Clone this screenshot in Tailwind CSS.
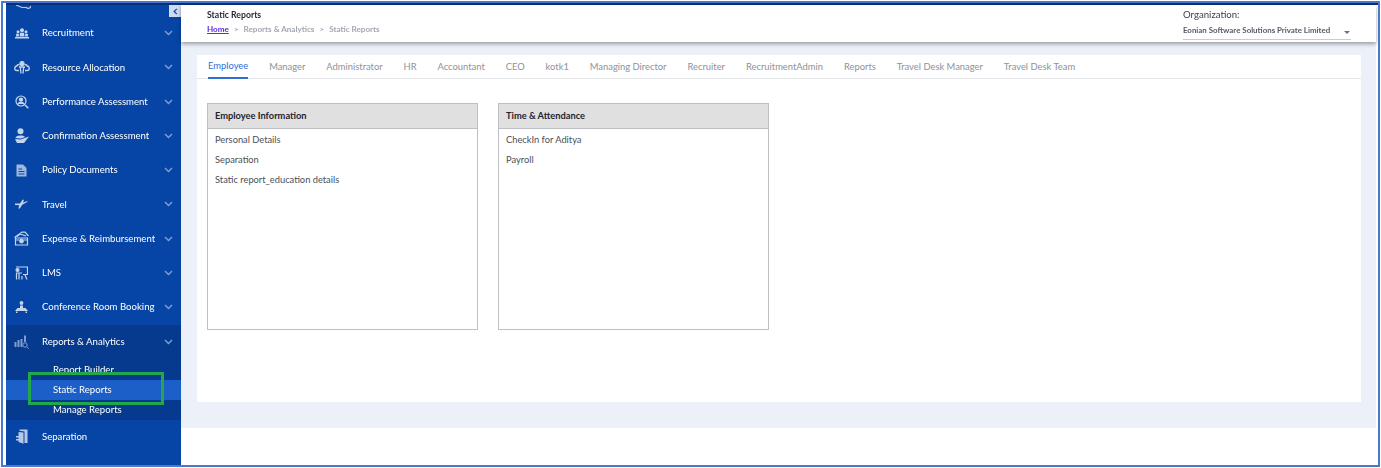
<!DOCTYPE html>
<html lang="en">

<head>
    <meta charset="UTF-8" />
    <title>Static Reports</title>
    <script src="https://cdn.jsdelivr.net/npm/@tailwindcss/browser@4"></script>
</head>

<body class="bg-white overflow-hidden font-['Lato',sans-serif]">
    <div class="relative w-[1381px] h-[468px] p-[1px]">
        <div class="w-full h-full border-2 border-[#4a78cc] flex flex-col overflow-hidden">
            <div class="h-[2px] ml-[3px] bg-[#0a2f78] shrink-0"></div>
            <div class="flex flex-1 min-h-0 pl-[3px] blur-[0.3px]">

                <!-- Sidebar -->
                <aside class="relative w-[175px] shrink-0 bg-[#0645a5] text-[9.6px] text-white whitespace-nowrap overflow-hidden">
                    <div class="absolute right-0 top-0 w-[12px] h-[12px] bg-[#cfdcf0] text-[#1c4f9e] flex items-center justify-center">
                        <svg width="7" height="7" viewBox="0 0 8 8" fill="none" stroke="currentColor" stroke-width="1.6"><path d="M5.5 1 L2.5 4 L5.5 7" /></svg>
                    </div>

                    <div class="h-[11px] flex pl-[9px] items-start overflow-hidden">
                        <svg width="16" height="4" viewBox="0 0 16 4" fill="none" stroke="#b9cbe8" stroke-width="1.2"><path d="M1 0 L7 2.5 H11" /><path d="M11 2 C12 4 15 4 16 1" /></svg>
                    </div>

                    <!-- Recruitment -->
                    <div class="h-[34.25px] flex items-center">
                        <span class="w-[31px] mr-[5px] flex justify-center">
                            <svg width="14" height="11" viewBox="0 0 14 11" fill="#c4d4ec"><circle cx="7" cy="2.2" r="2" /><circle cx="3" cy="3.8" r="1.5" /><circle cx="11" cy="3.8" r="1.5" /><path d="M5 4.8 H9 L9.5 8.5 H4.5 Z M1.2 5.8 H4 L3.8 8.5 H1 Z M10 5.8 H12.8 L13 8.5 H10.2 Z M0 9 H14 V10.5 H0 Z" /></svg>
                        </span>
                        <span class="flex-1 pt-[1px]">Recruitment</span>
                        <svg class="mr-[8px]" width="9" height="6" viewBox="0 0 9 6" fill="none" stroke="#7f9fd2" stroke-width="1.4"><path d="M1 1 L4.5 4.6 L8 1" /></svg>
                    </div>

                    <!-- Resource Allocation -->
                    <div class="h-[34.25px] flex items-center">
                        <span class="w-[31px] mr-[5px] flex justify-center">
                            <svg width="16" height="13" viewBox="0 0 16 13" fill="none" stroke="#c4d4ec" stroke-width="1.3"><circle cx="8" cy="2.6" r="2" fill="#c4d4ec" /><path d="M5.5 3.5 C3 3.5 3 5 3 5 C0 5.5 0 9.5 3 9.5 H5 M10.5 3.5 C13 3.5 13 5 13 5 C16 5.5 16 9.5 13 9.5 H11" /><path d="M5 6 H11 M6.3 6 L7 12.5 M9.7 6 L9 12.5" /></svg>
                        </span>
                        <span class="flex-1 pt-[1px]">Resource Allocation</span>
                        <svg class="mr-[8px]" width="9" height="6" viewBox="0 0 9 6" fill="none" stroke="#7f9fd2" stroke-width="1.4"><path d="M1 1 L4.5 4.6 L8 1" /></svg>
                    </div>

                    <!-- Performance Assessment -->
                    <div class="h-[34.25px] flex items-center">
                        <span class="w-[31px] mr-[5px] flex justify-center">
                            <svg width="14" height="14" viewBox="0 0 14 14" fill="none" stroke="#c4d4ec" stroke-width="1.2"><circle cx="6" cy="6" r="5" /><circle cx="6" cy="4.6" r="1.6" fill="#c4d4ec" /><path d="M3 9 C3.5 6.8 8.5 6.8 9 9" fill="#c4d4ec" /><path d="M10 10 L13.3 13.3" stroke-width="1.5" /></svg>
                        </span>
                        <span class="flex-1 pt-[1px]">Performance Assessment</span>
                        <svg class="mr-[8px]" width="9" height="6" viewBox="0 0 9 6" fill="none" stroke="#7f9fd2" stroke-width="1.4"><path d="M1 1 L4.5 4.6 L8 1" /></svg>
                    </div>

                    <!-- Confirmation Assessment -->
                    <div class="h-[34.25px] flex items-center">
                        <span class="w-[31px] mr-[5px] flex justify-center">
                            <svg width="16" height="16" viewBox="0 0 16 16" fill="#c4d4ec"><circle cx="6.5" cy="3.2" r="3" /><path d="M1.5 10 C1.5 6.8 10.5 6.8 11 9 L7 10.5 Z" /><path d="M1 11 L6.5 11.5 L15 8.5 L10 15 H3 Z" /></svg>
                        </span>
                        <span class="flex-1 pt-[1px]">Confirmation Assessment</span>
                        <svg class="mr-[8px]" width="9" height="6" viewBox="0 0 9 6" fill="none" stroke="#7f9fd2" stroke-width="1.4"><path d="M1 1 L4.5 4.6 L8 1" /></svg>
                    </div>

                    <!-- Policy Documents -->
                    <div class="h-[34.25px] flex items-center">
                        <span class="w-[31px] mr-[5px] flex justify-center">
                            <svg width="11" height="13" viewBox="0 0 11 13" fill="#9db8e0"><path d="M0.5 0.5 H7 L10.5 4 V12.5 H0.5 Z" /><path d="M2.5 5 H6 M2.5 7.5 H8.5 M2.5 10 H8.5" stroke="#0645a5" stroke-width="1" /></svg>
                        </span>
                        <span class="flex-1 pt-[1px]">Policy Documents</span>
                        <svg class="mr-[8px]" width="9" height="6" viewBox="0 0 9 6" fill="none" stroke="#7f9fd2" stroke-width="1.4"><path d="M1 1 L4.5 4.6 L8 1" /></svg>
                    </div>

                    <!-- Travel -->
                    <div class="h-[34.25px] flex items-center">
                        <span class="w-[31px] mr-[5px] flex justify-center">
                            <svg width="13" height="10" viewBox="0 0 13 10" fill="#c4d4ec"><path d="M0 4.6 L5 4.4 L7.5 0.8 H9 L8 3.8 L13 1.8 L11.5 3.6 L7.2 5.8 L4.8 9.6 H3.4 L4.3 6.2 L0 6 Z" /></svg>
                        </span>
                        <span class="flex-1 pt-[1px]">Travel</span>
                        <svg class="mr-[8px]" width="9" height="6" viewBox="0 0 9 6" fill="none" stroke="#7f9fd2" stroke-width="1.4"><path d="M1 1 L4.5 4.6 L8 1" /></svg>
                    </div>

                    <!-- Expense & Reimbursement -->
                    <div class="h-[34.25px] flex items-center">
                        <span class="w-[31px] mr-[5px] flex justify-center">
                            <svg width="15" height="15" viewBox="0 0 15 15" fill="none" stroke="#c4d4ec" stroke-width="1.2"><path d="M0.5 6.5 L8 1 L11 1.2 L14.5 5 M3 5.5 L6 3 L12 5 M1.5 7 H13.5 V14 H1.5 Z" /><path d="M1.5 9 H5 M10 9 H13.5" /><circle cx="7.5" cy="10" r="1.8" fill="#c4d4ec" /></svg>
                        </span>
                        <span class="flex-1 pt-[1px]">Expense &amp; Reimbursement</span>
                        <svg class="mr-[8px]" width="9" height="6" viewBox="0 0 9 6" fill="none" stroke="#7f9fd2" stroke-width="1.4"><path d="M1 1 L4.5 4.6 L8 1" /></svg>
                    </div>

                    <!-- LMS -->
                    <div class="h-[34.25px] flex items-center">
                        <span class="w-[31px] mr-[5px] flex justify-center">
                            <svg width="13" height="14" viewBox="0 0 13 14" fill="none" stroke="#c4d4ec" stroke-width="1.2"><path d="M1 1 H12.5 V8.5 H8" /><circle cx="2.5" cy="4" r="1.5" fill="#c4d4ec" /><path d="M1 7 H7 M1.5 7 V13.5 M4 7 V13.5 M7 10 V13.5 M10 9 L12 13.5" /></svg>
                        </span>
                        <span class="flex-1 pt-[1px]">LMS</span>
                        <svg class="mr-[8px]" width="9" height="6" viewBox="0 0 9 6" fill="none" stroke="#7f9fd2" stroke-width="1.4"><path d="M1 1 L4.5 4.6 L8 1" /></svg>
                    </div>

                    <!-- Conference Room Booking -->
                    <div class="h-[35px] pb-[1px] flex items-center">
                        <span class="w-[31px] mr-[5px] flex justify-center">
                            <svg width="13" height="12" viewBox="0 0 13 12" fill="#c4d4ec"><circle cx="6.5" cy="2" r="1.9" /><path d="M5 4.5 H8 V7 H5 Z M2.5 7 H10.5 L13 10 H0 Z M1 10.5 H2.5 V12 H1 Z M10.5 10.5 H12 V12 H10.5 Z" /></svg>
                        </span>
                        <span class="flex-1 pt-[1px]">Conference Room Booking</span>
                        <svg class="mr-[8px]" width="9" height="6" viewBox="0 0 9 6" fill="none" stroke="#7f9fd2" stroke-width="1.4"><path d="M1 1 L4.5 4.6 L8 1" /></svg>
                    </div>

                    <!-- Reports & Analytics -->
                    <div class="bg-[#053a8e]">
                        <div class="h-[35px] pb-[1px] flex items-center">
                            <span class="w-[31px] mr-[5px] flex justify-center">
                                <svg width="15" height="14" viewBox="0 0 15 14" fill="#7f9ccd"><path d="M0.5 7 H2.5 V12 H0.5 Z M3.5 5 H5.5 V12 H3.5 Z M6.5 4 H8.5 V12 H6.5 Z M10 0.5 H12 V7 H10 Z" /><circle cx="11" cy="10" r="2.2" fill="none" stroke="#7f9ccd" /><path d="M12.6 11.6 L14.7 13.7" stroke="#7f9ccd" /></svg>
                            </span>
                            <span class="flex-1 pt-[1px]">Reports &amp; Analytics</span>
                            <svg class="mr-[8px]" width="9" height="6" viewBox="0 0 9 6" fill="none" stroke="#7f9fd2" stroke-width="1.4"><path d="M1 1 L4.5 4.6 L8 1" /></svg>
                        </div>
                        <div class="h-[20px] pl-[47px] flex items-center">Report Builder</div>
                        <div class="h-[20px] pl-[47px] flex items-center bg-[#1c5fc8]">Static Reports</div>
                        <div class="h-[20px] pl-[47px] flex items-center">Manage Reports</div>
                    </div>

                    <!-- Separation -->
                    <div class="h-[33px] flex items-center">
                        <span class="w-[31px] mr-[5px] flex justify-center">
                            <svg width="12" height="15" viewBox="0 0 12 15" fill="#b5c8e8"><path d="M3.5 0.5 H11.5 V14 H8.5 V2.5 L3.5 1.8 Z" /><path d="M2.5 3 L7.5 3.5 V14.8 L2.5 13 Z" /><path d="M0 7 H3 V8.5 H0 Z M0 10 H3 V11.5 H0 Z" /></svg>
                        </span>
                        <span class="flex-1 pt-[1px]">Separation</span>
                    </div>
                </aside>

                <!-- Main -->
                <main class="flex-1 min-w-0 flex flex-col">
                    <header class="relative z-10 h-[37px] shrink-0 mr-[2px] bg-white shadow-[0_2px_4px_rgba(0,0,0,0.35)] flex justify-between pl-[26px] pr-[25px]">
                        <div class="pt-[4px]">
                            <h1 class="text-[8.7px] leading-[12px] font-bold text-[#1f2430]">Static Reports</h1>
                            <div class="flex items-center mt-[2px] text-[8.1px] leading-[13px] font-bold text-[#a3a7b0]">
                                <a href="#" class="text-[#5b2be0] underline">Home</a>
                                <span class="mx-[5px]">&gt;</span>
                                <span>Reports &amp; Analytics</span>
                                <span class="mx-[5px]">&gt;</span>
                                <span>Static Reports</span>
                            </div>
                        </div>
                        <div class="w-[168px] pt-[3px]">
                            <div class="text-[9.6px] leading-[14px] text-[#3a3f4a]">Organization:</div>
                            <div class="flex items-center justify-between h-[18px] border-b border-[#c9ccd2] pr-[1px] text-[7.9px] font-bold text-[#555b66] whitespace-nowrap">
                                <span>Eonian Software Solutions Private Limited</span>
                                <span class="mt-[3px] w-0 h-0 border-x-[3px] border-x-transparent border-t-[3px] border-t-[#6b7280]"></span>
                            </div>
                        </div>
                    </header>

                    <div class="h-[386px] shrink-0 mr-[2px] bg-[#ecf0f8] pt-[13px] pl-[16px] pr-[15px] pb-[26px]">
                        <section class="bg-white h-full">
                            <nav class="h-[24px] border-b border-[#e3e5e8] flex pl-[11px] gap-[20.9px] text-[9.4px] text-[#8d929b] whitespace-nowrap">
                                <a class="h-[24px] border-b-2 border-[#2f6fd6] text-[#2f6fd6] flex items-center pt-[1px]">Employee</a>
                                <a class="flex items-center pt-[1px]">Manager</a>
                                <a class="flex items-center pt-[1px]">Administrator</a>
                                <a class="flex items-center pt-[1px]">HR</a>
                                <a class="flex items-center pt-[1px]">Accountant</a>
                                <a class="flex items-center pt-[1px]">CEO</a>
                                <a class="flex items-center pt-[1px]">kotk1</a>
                                <a class="flex items-center pt-[1px]">Managing Director</a>
                                <a class="flex items-center pt-[1px]">Recruiter</a>
                                <a class="flex items-center pt-[1px]">RecruitmentAdmin</a>
                                <a class="flex items-center pt-[1px]">Reports</a>
                                <a class="flex items-center pt-[1px]">Travel Desk Manager</a>
                                <a class="flex items-center pt-[1px]">Travel Desk Team</a>
                            </nav>

                            <div class="flex gap-[20px] pl-[10px] pt-[24px]">
                                <div class="w-[271px] h-[227px] border border-[#bdbfc3]">
                                    <div class="h-[25px] bg-[#e0e0e0] border-b border-[#bdbfc3] flex items-center pl-[7px] text-[9.3px] font-bold text-[#1f2430]">Employee Information</div>
                                    <ul class="pl-[7px] pt-[1px] text-[9.3px] text-[#4a4f58]">
                                        <li class="h-[20px] flex items-center">Personal Details</li>
                                        <li class="h-[20px] flex items-center">Separation</li>
                                        <li class="h-[20px] flex items-center">Static report_education details</li>
                                    </ul>
                                </div>
                                <div class="w-[271px] h-[227px] border border-[#bdbfc3]">
                                    <div class="h-[25px] bg-[#e0e0e0] border-b border-[#bdbfc3] flex items-center pl-[7px] text-[9.3px] font-bold text-[#1f2430]">Time &amp; Attendance</div>
                                    <ul class="pl-[7px] pt-[1px] text-[9.3px] text-[#4a4f58]">
                                        <li class="h-[20px] flex items-center">CheckIn for Aditya</li>
                                        <li class="h-[20px] flex items-center">Payroll</li>
                                    </ul>
                                </div>
                            </div>
                        </section>
                    </div>
                </main>
            </div>
        </div>

        <!-- green annotation box drawn over the sidebar -->
        <div class="absolute left-[28px] top-[372px] w-[136px] h-[33px] border-[3px] border-[#22a84a]"></div>
    </div>
</body>

</html>
